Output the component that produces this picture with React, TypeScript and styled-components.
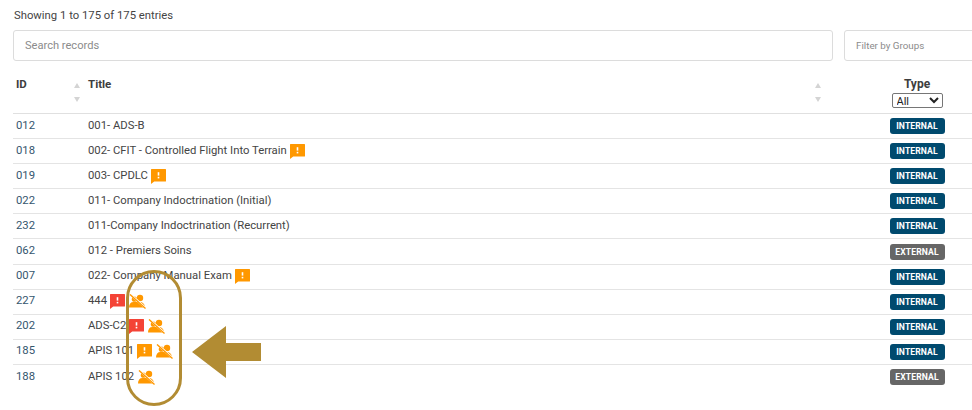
import React from "react";
import styled, { createGlobalStyle } from "styled-components";

const GlobalStyle = createGlobalStyle`
  html, body {
    margin: 0;
    padding: 0;
    background: #fff;
  }
  body {
    font-family: Roboto, "Liberation Sans", sans-serif;
    color: #3a3a3a;
  }
`;

const Page = styled.div`
  position: relative;
  width: 972px;
  height: 410px;
  overflow: hidden;
  padding: 9px 0 0 13px;
  box-sizing: border-box;
`;

const Summary = styled.div`
  font-size: 11.3px;
  line-height: 14px;
  margin-left: 1px;
  color: #444;
`;

const Filters = styled.div`
  display: flex;
  gap: 11px;
  margin-top: 7px;
  width: 1000px;
`;

const FilterBox = styled.div<{ $width: number; $size: number }>`
  width: ${(p) => p.$width}px;
  height: 31px;
  box-sizing: border-box;
  border: 1px solid #dcdcdc;
  border-radius: 3px;
  padding-left: 11px;
  display: flex;
  align-items: center;
  font-size: ${(p) => p.$size}px;
  color: #8b8b8b;
`;

const HeaderRow = styled.div`
  display: grid;
  grid-template-columns: 75px 1fr 110px;
  height: 52px;
  border-bottom: 1px solid #e0e0e0;
  font-weight: 700;
  font-size: 11.5px;
  color: #3d3d3d;
`;

const HeaderCell = styled.div<{ $inset?: number }>`
  position: relative;
  padding: 16px 0 0 ${(p) => p.$inset ?? 0}px;
  line-height: 14px;
`;

const TypeHeader = styled.div`
  display: flex;
  flex-direction: column;
  align-items: center;
  padding-top: 16px;
  font-size: 12px;
  line-height: 14px;
`;

const SortArrows = styled.div<{ $right: number }>`
  position: absolute;
  top: 22px;
  right: ${(p) => p.$right}px;
  display: flex;
  flex-direction: column;
  gap: 9px;
  font-size: 0;
`;

const SortArrow = styled.span<{ $down?: boolean }>`
  width: 0;
  height: 0;
  border-left: 3px solid transparent;
  border-right: 3px solid transparent;
  border-${(p) => (p.$down ? "top" : "bottom")}: 5px solid #d4d4d4;
`;

const TypeSelect = styled.select`
  width: 51px;
  height: 15px;
  margin-top: 2px;
  padding: 0;
  font-family: Roboto, "Liberation Sans", sans-serif;
  font-size: 11px;
  font-weight: 400;
  color: #222;
  background: #fff;
  border: 1px solid #767676;
  border-radius: 2px;
`;

const Row = styled.div<{ $last?: boolean }>`
  display: grid;
  grid-template-columns: 75px 1fr 110px;
  height: 25.1px;
  box-sizing: border-box;
  border-bottom: ${(p) => (p.$last ? "none" : "1px solid #e4e4e4")};
  align-items: center;
  font-size: 11.3px;
  color: #444;
`;

const IdCell = styled.div`
  padding: 0 0 2px 3px;
  color: #35566e;
`;

const TitleCell = styled.div`
  display: flex;
  align-items: center;
  gap: 3px;
  white-space: nowrap;
`;

const TitleText = styled.span`
  margin-bottom: 2px;
`;

const NoteSvg = styled.svg<{ $level: "warn" | "alert" }>`
  width: 15px;
  height: 15px;
  color: ${(p) => (p.$level === "alert" ? "#f44336" : "#ff9800")};
`;

const UsersSvg = styled.svg`
  width: 17px;
  height: 15px;
  margin-left: 1px;
  color: #ff9800;
`;

const TypeCell = styled.div`
  display: flex;
  justify-content: center;
`;

const Badge = styled.span<{ $external?: boolean }>`
  width: 55px;
  height: 16px;
  border-radius: 3px;
  display: flex;
  align-items: center;
  justify-content: center;
  font-size: 8.6px;
  font-weight: 700;
  letter-spacing: 0.1px;
  color: #fff;
  background: ${(p) => (p.$external ? "#666666" : "#004a6e")};
`;

const Oval = styled.div`
  position: absolute;
  left: 126px;
  top: 270px;
  width: 56px;
  height: 136px;
  box-sizing: border-box;
  border: 3px solid #b28c33;
  border-radius: 28px;
`;

const Arrow = styled.svg`
  position: absolute;
  left: 192px;
  top: 326px;
`;

type Level = "warn" | "alert";

type Item = {
  id: string;
  title: string;
  note?: Level;
  noUsers?: boolean;
  external?: boolean;
};

const items: Item[] = [
  { id: "012", title: "001- ADS-B" },
  { id: "018", title: "002- CFIT - Controlled Flight Into Terrain", note: "warn" },
  { id: "019", title: "003- CPDLC", note: "warn" },
  { id: "022", title: "011- Company Indoctrination (Initial)" },
  { id: "232", title: "011-Company Indoctrination (Recurrent)" },
  { id: "062", title: "012 - Premiers Soins", external: true },
  { id: "007", title: "022- Company Manual Exam", note: "warn" },
  { id: "227", title: "444", note: "alert", noUsers: true },
  { id: "202", title: "ADS-C2", note: "alert", noUsers: true },
  { id: "185", title: "APIS 101", note: "warn", noUsers: true },
  { id: "188", title: "APIS 102", noUsers: true, external: true },
];

const Sort = ({ right }: { right: number }) => (
  <SortArrows $right={right}>
    <SortArrow />
    <SortArrow $down />
  </SortArrows>
);

const NoteIcon = ({ level }: { level: Level }) => (
  <NoteSvg $level={level} viewBox="0 0 15 15">
    <path d="M0.6 0H14.4a.6 .6 0 0 1 .6 .6V12a.6 .6 0 0 1-.6 .6H3.2L0 15V.6a.6 .6 0 0 1 .6-.6Z" fill="currentColor" />
    <rect x="6.7" y="3.2" width="1.6" height="3.4" fill="#fff" />
    <rect x="6.7" y="7.8" width="1.6" height="1.6" fill="#fff" />
  </NoteSvg>
);

const UsersIcon = () => (
  <UsersSvg viewBox="0 0 17 15">
    <circle cx="11" cy="4" r="3.2" fill="currentColor" />
    <circle cx="5.4" cy="5.2" r="2.6" fill="currentColor" />
    <path d="M0 13.5C0 10 1.6 8 4.5 8H11C14 8 16 10.5 16 13.5Z" fill="currentColor" />
    <path d="M1 0L16.5 14" stroke="#fff" strokeWidth="2.2" />
    <path d="M1 0.4L16.5 14.4" stroke="currentColor" strokeWidth="1.3" />
  </UsersSvg>
);

export default function App() {
  return (
    <Page>
      <GlobalStyle />
      <Summary>Showing 1 to 175 of 175 entries</Summary>
      <Filters>
        <FilterBox $width={820} $size={11.1}>Search records</FilterBox>
        <FilterBox $width={150} $size={9.8}>Filter by Groups</FilterBox>
      </Filters>
      <HeaderRow>
        <HeaderCell $inset={3}>
          ID
          <Sort right={8} />
        </HeaderCell>
        <HeaderCell>
          Title
          <Sort right={41} />
        </HeaderCell>
        <TypeHeader>
          Type
          <TypeSelect defaultValue="All">
            <option>All</option>
          </TypeSelect>
        </TypeHeader>
      </HeaderRow>
      {items.map((item, i) => (
        <Row key={item.id} $last={i === items.length - 1}>
          <IdCell>{item.id}</IdCell>
          <TitleCell>
            <TitleText>{item.title}</TitleText>
            {item.note && <NoteIcon level={item.note} />}
            {item.noUsers && <UsersIcon />}
          </TitleCell>
          <TypeCell>
            <Badge $external={item.external}>
              {item.external ? "EXTERNAL" : "INTERNAL"}
            </Badge>
          </TypeCell>
        </Row>
      ))}
      <Oval />
      <Arrow width="69" height="52" viewBox="0 0 69 52">
        <polygon points="0,26 34,0 34,17 69,17 69,35 34,35 34,52" fill="#b28c33" />
      </Arrow>
    </Page>
  );
}
